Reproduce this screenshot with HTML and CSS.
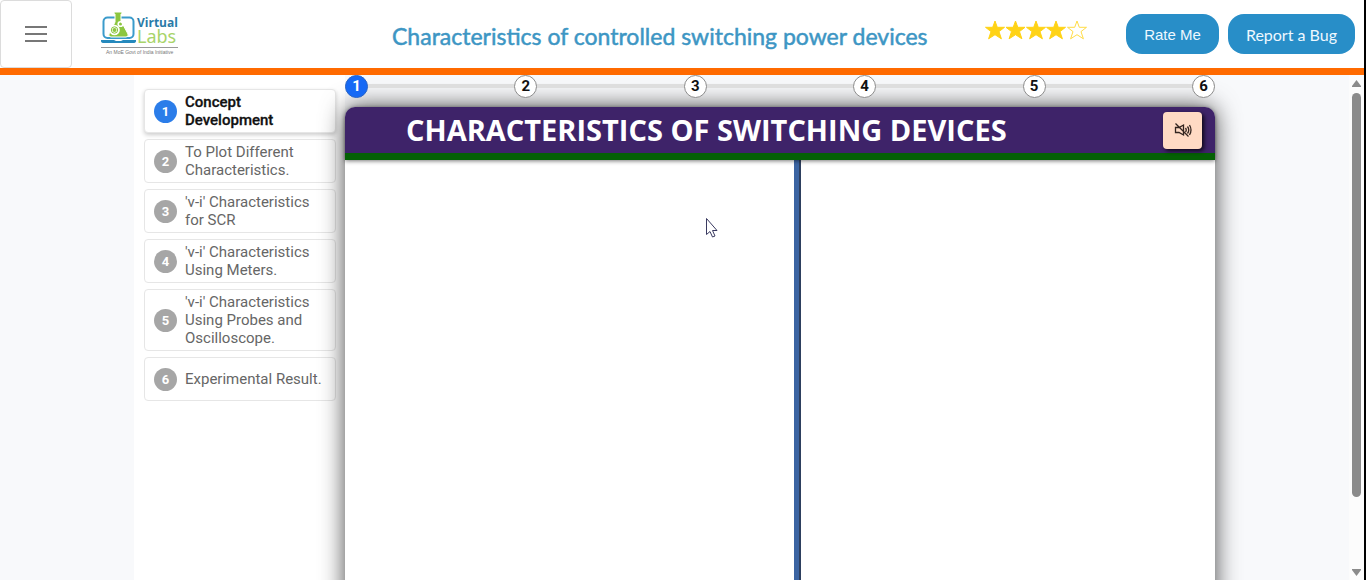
FILE: index.html
```html
<!DOCTYPE html>
<html lang="en">
<head>
<meta charset="utf-8">
<meta name="viewport" content="width=device-width, initial-scale=1">
<title>Virtual Labs</title>
<link rel="stylesheet" href="styles.css">
</head>
<body>
<header class="topbar">
  <button class="menu" type="button" aria-label="Menu">
    <svg width="22" height="18" viewBox="0 0 22 18" stroke="#777" stroke-width="2"><path d="M0 2H22M0 9H22M0 16H22"/></svg>
  </button>
  <a class="logo" href="#" aria-label="Virtual Labs">
    <svg width="80" height="45" viewBox="0 0 80 45">
      <rect x="2.500" y="5.500" width="30" height="20.500" rx="4" fill="none" stroke="#3b9bcb" stroke-width="2"/>
      <path d="M14 0h7v2h-1v7l7 13q1 3-2 3H10q-3 0-2-3l6-12V2h-1V0z" fill="#8cc63f" stroke="#fff" stroke-width="1"/>
      <circle cx="13.500" cy="18" r="5.300" fill="#fff"/>
      <circle cx="13.500" cy="18" r="3.200" fill="none" stroke="#8cc63f" stroke-width="1"/>
      <circle cx="13.500" cy="18" r="2" fill="#8cc63f"/>
      <circle cx="19.500" cy="12" r="2.300" fill="none" stroke="#fff" stroke-width="1.600"/>
      <path d="M0 28h35v1q0 2-3 2H3q-3 0-3-2z" fill="#2589bd"/>
      <path d="M13 28h9l-2 1h-5z" fill="#fff"/>
      <path d="M0 35.500h77" stroke="#999" stroke-width="1"/>
      <text class="logo-virtual" x="36" y="15">Virtual</text>
      <text class="logo-labs" x="36" y="31">Labs</text>
      <text class="logo-note" x="5" y="42">An MoE Govt of India Initiative</text>
    </svg>
  </a>
  <h1 class="page-title">Characteristics of controlled switching power devices</h1>
  <div class="actions">
    <svg class="stars" role="img" aria-label="4 of 5 stars" width="103" height="20" viewBox="0 0 103 20">
      <defs><path id="star" d="M10 1l2.300 6.300h7.200l-5.500 4.300 2.400 7.200L10 14.700l-6.400 4.100L6 11.600.5 7.300h7.200z"/></defs>
      <g fill="#ffd316" stroke="#ffd316"><use href="#star"/><use href="#star" x="20.500"/><use href="#star" x="41"/><use href="#star" x="61"/></g>
      <use href="#star" x="82" fill="#fff" stroke="#ffdc45"/>
    </svg>
    <div class="buttons">
      <button class="pill" type="button">Rate Me</button>
      <button class="pill pill-bug" type="button">Report a Bug</button>
    </div>
  </div>
</header>
<main class="frame">
  <div class="content">
    <nav class="sidebar" aria-label="Sections">
      <a class="card card-active" href="#"><span class="num">1</span><span>Concept Development</span></a>
      <a class="card" href="#"><span class="num">2</span><span>To Plot Different Characteristics.</span></a>
      <a class="card" href="#"><span class="num">3</span><span>'v-i' Characteristics for SCR</span></a>
      <a class="card" href="#"><span class="num">4</span><span>'v-i' Characteristics Using Meters.</span></a>
      <a class="card" href="#"><span class="num">5</span><span>'v-i' Characteristics Using Probes and Oscilloscope.</span></a>
      <a class="card" href="#"><span class="num">6</span><span>Experimental Result.</span></a>
    </nav>
    <section class="lab">
      <div class="steps">
        <button class="step step-active" type="button">1</button>
        <button class="step" type="button">2</button>
        <button class="step" type="button">3</button>
        <button class="step" type="button">4</button>
        <button class="step" type="button">5</button>
        <button class="step" type="button">6</button>
      </div>
      <div class="stage">
        <div class="stage-head">
          <h2 class="stage-title">CHARACTERISTICS OF SWITCHING DEVICES</h2>
          <button class="mute" type="button" aria-label="Unmute">
            <svg width="18" height="16" viewBox="0 0 18 16" fill="none" stroke="#33241f" stroke-width="1.300">
              <path d="M1.500 5.500h3.500L9.500 3v10L5 10.500H1.500zM1.500 1.500l13 13"/>
              <path d="M11.500 6q1.500 2 0 4M13.500 4.500q2.500 3.500 0 7M15.500 3q3 5 0 10"/>
            </svg>
          </button>
        </div>
        <div class="panes">
          <div class="pane">
            <svg class="cursor" width="12" height="20" viewBox="0 0 12 20"><path d="M.5.5v16l3.500-3 2.500 5.500 2.500-1-2.500-5.500H11z" fill="#fff" stroke="#3a3a60"/></svg>
          </div>
          <div class="divider"></div>
          <div class="pane"></div>
        </div>
      </div>
    </section>
  </div>
  <div class="scrollbar" aria-hidden="true">
    <svg width="9" height="7" viewBox="0 0 9 7"><path d="M4.500 0L9 6v1H0V6z" fill="#8b8b8b"/></svg>
    <div class="track"><div class="thumb"></div></div>
    <svg width="9" height="7" viewBox="0 0 9 7"><path d="M4.500 7L9 1V0H0v1z" fill="#8b8b8b"/></svg>
  </div>
</main>
</body>
</html>
```
FILE: styles.css
```css
* { box-sizing: border-box; }
body {
  margin: 0;
  height: 100vh;
  display: flex;
  flex-direction: column;
  overflow: hidden;
  border-right: 2px solid #000;
  background: #f8f9fb;
  font-family: Roboto, "Liberation Sans", sans-serif;
}
button { font: inherit; cursor: pointer; }
h1, h2 { margin: 0; }
svg { display: block; }

.topbar {
  display: flex;
  align-items: center;
  background: #fff;
  border-bottom: 7px solid #ff6a00;
}
.menu {
  width: 72px;
  height: 68px;
  display: grid;
  place-items: center;
  background: #fff;
  border: 1px solid #dcdcdc;
  border-radius: 4px;
}
.logo { margin-left: 29px; }
.logo-virtual { font: bold 12px "Open Sans", sans-serif; fill: #2a7ba8; }
.logo-labs { font: 18px "Noto Sans", sans-serif; fill: #a8d46a; }
.logo-note { font: 5px "Liberation Sans", sans-serif; fill: #777; }
.page-title {
  flex: 1;
  padding: 4px 0 0 211px;
  white-space: nowrap;
  font: 400 23px/30px Lato, sans-serif;
  color: #3d96c4;
  -webkit-text-stroke: 0.5px #3d96c4;
}
.actions { display: flex; gap: 38px; padding-right: 9px; }
.stars { margin-top: 6px; }
.buttons { display: flex; gap: 9px; }
.pill {
  height: 40px;
  padding: 0 18px;
  border: 0;
  border-radius: 16px;
  background: #288ec8;
  color: #eef8ff;
  font: 15px "Liberation Sans", sans-serif;
  white-space: nowrap;
}
.pill-bug { font: 16px Lato, sans-serif; }

.frame { flex: 1; min-height: 0; display: flex; }
.content {
  flex: 1;
  min-width: 0;
  display: flex;
  padding: 0 134px;
}
.sidebar {
  flex: 0 0 211px;
  display: flex;
  flex-direction: column;
  gap: 6px;
  padding: 14px 9px 0 10px;
  background: #fff;
}
.card {
  min-height: 44px;
  display: flex;
  align-items: center;
  gap: 8px;
  padding: 3px 4px 3px 9px;
  border: 1px solid #e6e6e6;
  border-radius: 4px;
  background: #fff;
  color: #666;
  font-size: 15px;
  line-height: 18px;
  text-decoration: none;
}
.card-active {
  color: #111;
  font-weight: 500;
  -webkit-text-stroke: 0.3px #111;
  box-shadow: 0 2px 4px #0003;
}
.num {
  flex: none;
  width: 23px;
  height: 23px;
  border-radius: 50%;
  background: #a6a6a6;
  color: #fff;
  font-size: 13px;
  font-weight: 700;
  line-height: 23px;
  text-align: center;
}
.card-active .num { background: #2b7de9; -webkit-text-stroke: 0; }

.lab { flex: 1; min-width: 0; display: flex; flex-direction: column; }
.steps {
  position: relative;
  z-index: 1;
  display: flex;
  justify-content: space-between;
  padding-bottom: 9px;
  background: linear-gradient(#dedede, #dedede) 0 9px / 100% 4px no-repeat;
}
.step {
  width: 23px;
  height: 23px;
  padding: 0;
  border: 1px solid #8c8c8c;
  border-radius: 50%;
  background: #fff;
  color: #111;
  font-size: 15px;
  font-weight: 700;
  line-height: 21px;
}
.step-active { background: #1569f5; border-color: #2b65c4; color: #fff; }
.stage {
  flex: 1;
  display: flex;
  flex-direction: column;
  margin-bottom: -40px;
  border-radius: 10px 10px 0 0;
  background: #fff;
  box-shadow: 0 0 25px #000000b8;
}
.stage-head {
  position: relative;
  display: flex;
  align-items: center;
  justify-content: space-between;
  padding: 0 13px 0 61px;
  height: 53px;
  background: #3e2369;
  border-bottom: 7px solid #046004;
  border-radius: 10px 10px 0 0;
  box-shadow: 0 1px 4px #0008;
}
.stage-title {
  white-space: nowrap;
  font: 700 29px/46px "Open Sans", sans-serif;
  color: #fff;
}
.mute {
  width: 39px;
  height: 37px;
  display: grid;
  place-items: center;
  padding: 0;
  border: 0;
  border-radius: 4px;
  background: #ffdac4;
  box-shadow: 2px 2px 4px #000c;
}
.panes { flex: 1; display: grid; grid-template-columns: 449fr 7px 414fr; }
.pane { position: relative; }
.divider { background: #3b64a2; border-right: 2px solid #2d3f5e; }
.cursor { position: absolute; left: 361px; top: 58px; }

.scrollbar {
  width: 15px;
  display: flex;
  flex-direction: column;
  align-items: center;
  gap: 6px;
  padding: 5px 0 4px;
  background: #fcfcfc;
}
.track { flex: 1; }
.thumb { width: 9px; height: 86%; border-radius: 5px; background: #8b8b8b; }
```
